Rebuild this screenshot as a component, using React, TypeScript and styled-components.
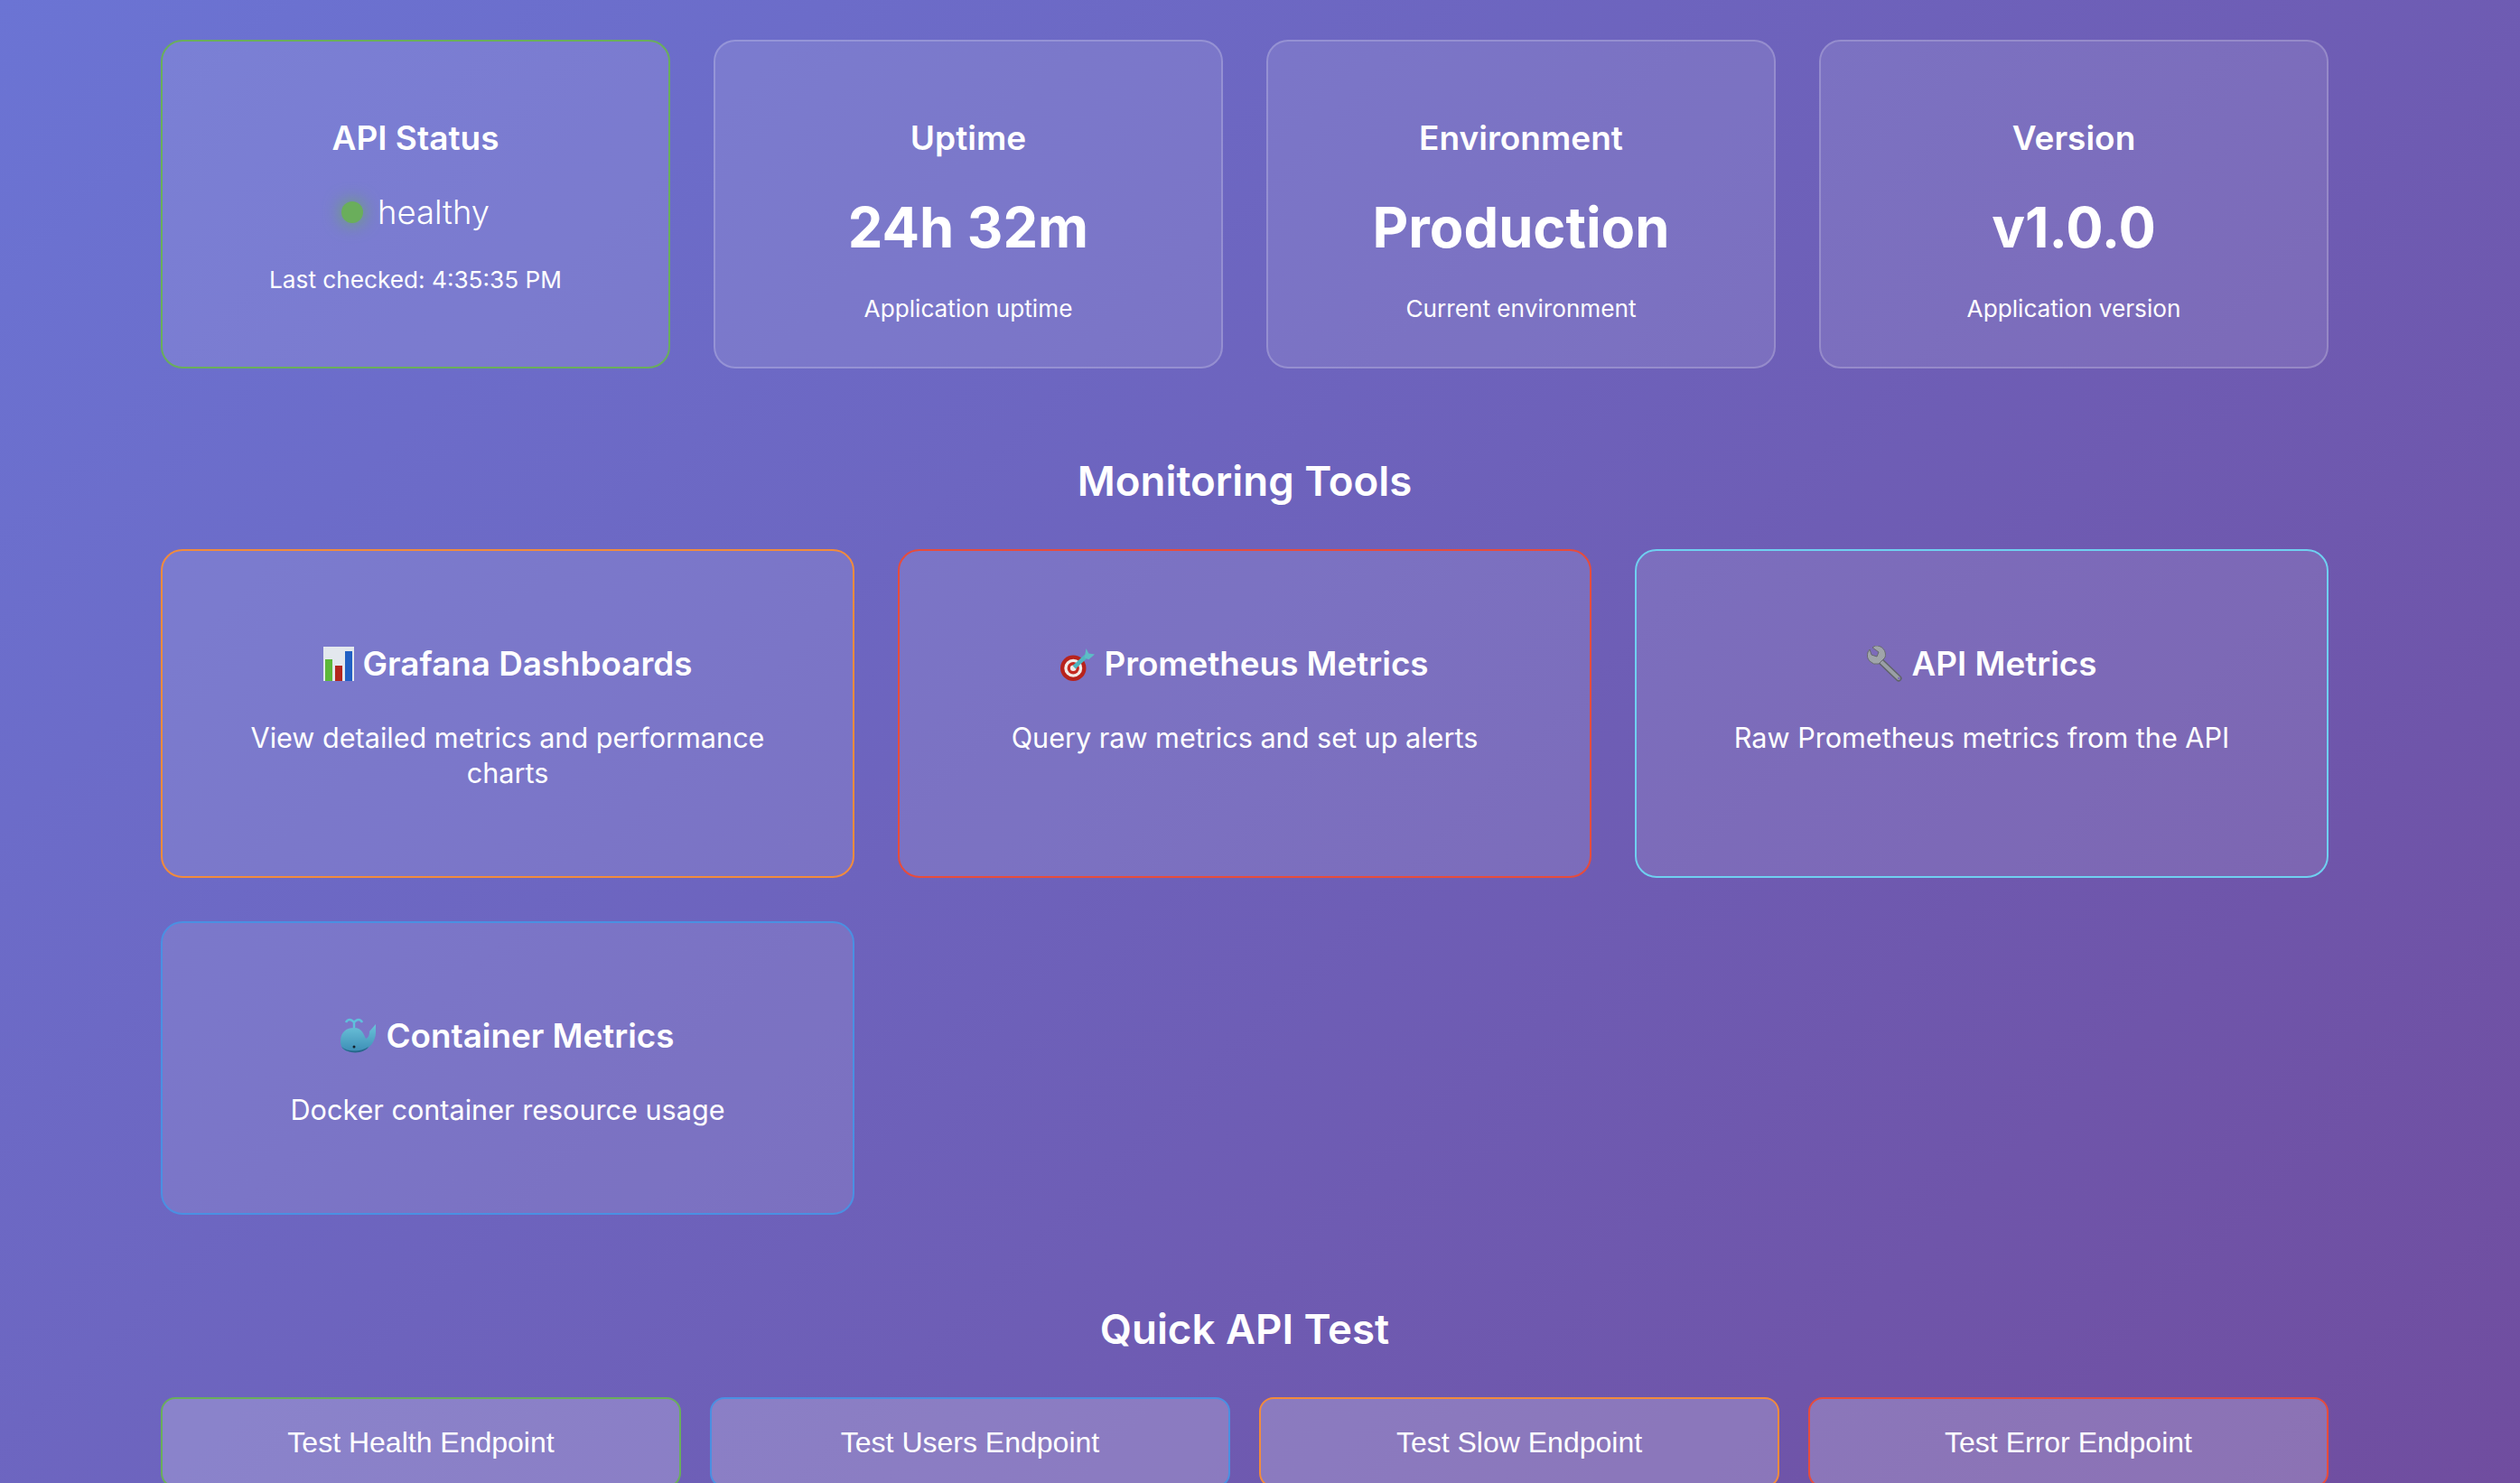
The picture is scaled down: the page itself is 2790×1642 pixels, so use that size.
import React from 'react';
import styled, { createGlobalStyle } from 'styled-components';

const GlobalStyle = createGlobalStyle`
  html, body {
    margin: 0;
    height: 1642px;
    overflow: hidden;
  }
  body {
    background: linear-gradient(135deg, #6b74d4 0%, #704d9f 100%);
    color: #fff;
    font-family: Inter, "Noto Sans", sans-serif;
  }
  * { box-sizing: border-box; }
`;

const Page = styled.div`
  width: 2400px;
  margin-left: 178px;
  padding-top: 44px;
`;

const StatusGrid = styled.div`
  display: grid;
  grid-template-columns: repeat(4, 1fr);
  gap: 48px;
`;

const Card = styled.div<{ $border?: string }>`
  border: 2px solid ${({ $border }) => $border ?? 'rgba(255, 255, 255, 0.2)'};
  border-radius: 24px;
  background: rgba(255, 255, 255, 0.1);
  text-align: center;
`;

const StatusCard = styled(Card)`
  height: 364px;
  padding: 48px;
`;

const StatusTitle = styled.h3`
  margin: 38px 0 0;
  font-size: 37px;
  line-height: 42px;
  font-weight: 600;
`;

const Big = styled.div`
  margin-top: 39px;
  font-size: 61.4px;
  line-height: 78px;
  font-weight: 700;
`;

const Note = styled.div<{ $top: number }>`
  margin-top: ${({ $top }) => $top}px;
  font-size: 26.2px;
  line-height: 31px;
`;

const Health = styled.div`
  margin-top: 37px;
  display: flex;
  align-items: center;
  justify-content: center;
  gap: 16px;
  font-size: 36.4px;
  line-height: 48px;
  font-weight: 300;
`;

const Dot = styled.span`
  width: 24px;
  height: 24px;
  border-radius: 50%;
  background: #6aae5b;
  box-shadow: 0 0 20px #6aae5b;
`;

const Heading = styled.h2<{ $top: number }>`
  margin: ${({ $top }) => $top}px 0 46px;
  text-align: center;
  font-size: 45.6px;
  line-height: 58px;
  font-weight: 600;
`;

const ToolGrid = styled.div`
  display: grid;
  grid-template-columns: repeat(3, 1fr);
  gap: 48px;
`;

const ToolCard = styled(Card)<{ $height: number }>`
  height: ${({ $height }) => $height}px;
  padding: 102px 48px 0;
`;

const ToolTitle = styled.h3`
  margin: 0;
  display: flex;
  align-items: center;
  justify-content: center;
  gap: 10px;
  font-size: 36.8px;
  line-height: 46px;
  font-weight: 600;
`;

const ToolText = styled.p`
  margin: 39px 0 0;
  font-size: 30.6px;
  line-height: 39px;
`;

const ButtonRow = styled.div`
  display: grid;
  grid-template-columns: repeat(4, 1fr);
  gap: 32px;
`;

const TestButton = styled.button<{ $border: string }>`
  height: 100px;
  border: 2px solid ${({ $border }) => $border};
  border-radius: 16px;
  background: rgba(255, 255, 255, 0.2);
  color: #fff;
  font-family: "Liberation Sans", Arial, sans-serif;
  font-size: 32px;
`;

const BarsIcon = () => (
  <svg width="34" height="38" viewBox="0 0 34 38">
    <rect width="34" height="38" fill="#e3e8ee" />
    <rect x="2" y="14" width="8" height="24" fill="#5cb83a" />
    <rect x="13" y="21" width="8" height="17" fill="#b3261e" />
    <rect x="24" y="5" width="8" height="33" fill="#2160c4" />
  </svg>
);

const DartIcon = () => (
  <svg width="38" height="38" viewBox="0 0 40 40">
    <circle cx="15" cy="25" r="15" fill="#b8231c" />
    <circle cx="15" cy="25" r="10.5" fill="#f2ece8" />
    <circle cx="15" cy="25" r="7" fill="#c42a20" />
    <circle cx="15" cy="25" r="3.5" fill="#f2ece8" />
    <path d="M16 24 L30 11" stroke="#4fb6bf" strokeWidth="5" />
    <path d="M28 13 L30 2 L33 8 L40 9 L33 15 Z" fill="#5dbcc6" />
  </svg>
);

const WrenchIcon = () => (
  <svg width="40" height="40" viewBox="0 0 40 40">
    <path d="M13 15 L35 36" stroke="#5f6368" strokeWidth="7" strokeLinecap="round" />
    <path d="M13 15 L35 36" stroke="#9a9fa5" strokeWidth="4" strokeLinecap="round" />
    <path d="M1 7 A10 10 0 0 0 13 20 L20 13 A10 10 0 0 0 9 0 L6 2 L13 7 L11 12 L5 10 L3 4 Z" fill="#a0a5aa" stroke="#66696e" strokeWidth="1" />
    <circle cx="35.5" cy="36" r="1.6" fill="#7f70b4" />
  </svg>
);

const WhaleIcon = () => (
  <svg width="40" height="40" viewBox="0 0 40 40">
    <defs>
      <linearGradient id="whale" x1="0" y1="0" x2="0" y2="1">
        <stop offset="0" stopColor="#6cc3da" />
        <stop offset="1" stopColor="#3d8fb6" />
      </linearGradient>
    </defs>
    <path d="M0 26 C0 15 7 11 15 11 C24 11 26 19 28 23 C31 22 32 19 32 15 L39 7 L39 16 C39 25 33 35 22 37 L8 37 C3 36 0 32 0 26 Z" fill="url(#whale)" />
    <path d="M1 32 C8 38 22 38 31 32 C26 40 8 41 1 32 Z" fill="#26668a" />
    <circle cx="15" cy="32" r="1.5" fill="#14222c" />
    <path d="M15 11 V5 M15 5 C12 1 8 1 6 5 M15 5 C18 1 22 1 24 5" stroke="#5fc0dc" strokeWidth="2.5" fill="none" />
  </svg>
);

const statuses = [
  { title: 'Uptime', value: '24h 32m', note: 'Application uptime' },
  { title: 'Environment', value: 'Production', note: 'Current environment' },
  { title: 'Version', value: 'v1.0.0', note: 'Application version' },
];

const tools = [
  { icon: <BarsIcon />, title: 'Grafana Dashboards', text: 'View detailed metrics and performance charts', border: '#f28b3c', height: 364 },
  { icon: <DartIcon />, title: 'Prometheus Metrics', text: 'Query raw metrics and set up alerts', border: '#e74c3c', height: 364 },
  { icon: <WrenchIcon />, title: 'API Metrics', text: 'Raw Prometheus metrics from the API', border: '#6fd0f0', height: 364 },
  { icon: <WhaleIcon />, title: 'Container Metrics', text: 'Docker container resource usage', border: '#4a90e2', height: 325 },
];

const buttons = [
  { label: 'Test Health Endpoint', border: '#6aae5b' },
  { label: 'Test Users Endpoint', border: '#4a90e2' },
  { label: 'Test Slow Endpoint', border: '#f28b3c' },
  { label: 'Test Error Endpoint', border: '#e74c3c' },
];

export default function App() {
  return (
    <Page>
      <GlobalStyle />
      <StatusGrid>
        <StatusCard $border="#6aae5b">
          <StatusTitle>API Status</StatusTitle>
          <Health>
            <Dot />
            healthy
          </Health>
          <Note $top={35}>Last checked: 4:35:35 PM</Note>
        </StatusCard>
        {statuses.map((s) => (
          <StatusCard key={s.title}>
            <StatusTitle>{s.title}</StatusTitle>
            <Big>{s.value}</Big>
            <Note $top={35}>{s.note}</Note>
          </StatusCard>
        ))}
      </StatusGrid>

      <Heading $top={96}>Monitoring Tools</Heading>
      <ToolGrid>
        {tools.map((t) => (
          <ToolCard key={t.title} $border={t.border} $height={t.height}>
            <ToolTitle>
              {t.icon}
              {t.title}
            </ToolTitle>
            <ToolText>{t.text}</ToolText>
          </ToolCard>
        ))}
      </ToolGrid>

      <Heading $top={98}>Quick API Test</Heading>
      <ButtonRow>
        {buttons.map((b) => (
          <TestButton key={b.label} $border={b.border}>
            {b.label}
          </TestButton>
        ))}
      </ButtonRow>
    </Page>
  );
}
